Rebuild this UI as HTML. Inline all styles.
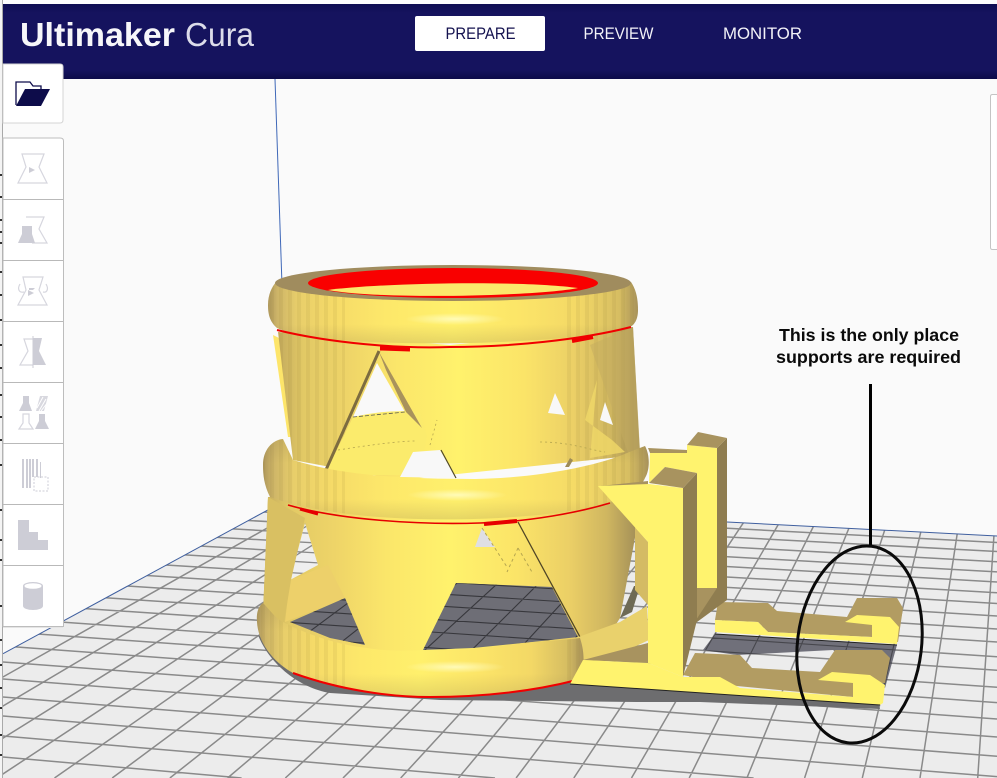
<!DOCTYPE html>
<html><head><meta charset="utf-8"><title>Ultimaker Cura</title>
<style>
html,body{margin:0;padding:0;background:#fafafa;width:997px;height:778px;overflow:hidden}
body{position:relative}
svg{position:absolute;left:0;top:0;display:block;overflow:hidden}
text{font-family:"Liberation Sans",sans-serif}
</style></head><body>
<svg width="997" height="778" viewBox="0 0 997 778" xmlns="http://www.w3.org/2000/svg">
<defs>
<clipPath id="plate"><path d="M3 653.700L287 499.600L997 536V778H3Z"/></clipPath>
<clipPath id="w1"><path d="M456 583L552 587L578 637L523 643L473 648L423 650Z"/></clipPath>
<clipPath id="w2"><path d="M290 622L345 598L365 645L330 638Z"/></clipPath>
<clipPath id="w3"><path d="M305 523L318 565L290 580Z"/></clipPath>
<clipPath id="w5"><path d="M703 650L715 634L897 645L885 688L833 650L737 655Z"/></clipPath>
<clipPath id="sides"><path d="M250 250H345V710H250ZM565 250H655V710H565Z"/></clipPath>
<pattern id="st" width="9" height="20" patternUnits="userSpaceOnUse"><rect width="4" height="20" fill="#8a7336" fill-opacity=".1"/></pattern>
<path id="grid" fill="none" d="M3 490L997 542.500M3 498L997 551.500M3 507L997 561.700M3 516L997 571.900M3 525L997 582M3 534.500L997 592.800M3 544L997 603.500M3 555L997 616M3 566.500L997 629M3 578L997 642M3 591L997 656.700M3 603L997 670.300M3 618L997 687.300M3 631.500L997 702.600M3 646L997 719M3 662L997 737M3 679L997 756.200M3 697L997 776.600M3 716L753.600 778M3 736L495 778M3 757L241.600 778
M1023 102L977.700 778M1023 102L920 778M1023 102L862.300 778M1023 102L804.600 778M1023 102L746.900 778M1023 102L689.200 778M1023 102L631.500 778M1023 102L573.800 778M1023 102L516.100 778M1023 102L458.400 778M1023 102L400.700 778M1023 102L343 778M1023 102L285.300 778M1023 102L227.600 778M1023 102L169.900 778M1023 102L112.200 778M1023 102L54.500 778M1023 102L-3.200 778M1023 102L-60.900 778M1023 102L-118.600 778M1023 102L-176.300 778M1023 102L-234 778M1023 102L-291.700 778M1023 102L-349.400 778"/>
<path id="rT" d="M268 305C268 294 272 287 276 282C350 262 556 262 631 282C635 288 638 296 638 310C638 320 634 325 630 327C580 345 330 352 277 328C270 322 268 315 268 305Z"/>
<path id="rM" d="M263 465C263 450 272 440 283 439L293 460C340 475 400 479 475 479C540 478 600 465 627 453L645 446C650 455 650 470 645 478C640 490 625 497 610 502C550 522 360 530 270 497C264 485 263 475 263 465Z"/>
<path id="rB" d="M257 622C256 610 260 605 263 603C270 610 275 618 283 622C310 636 340 645 367 648C385 651 405 651 423 650C455 650 490 648 523 643C545 641 565 640 580 638C584 650 584 660 583 667C581 674 578 678 574 681C530 693 470 698 427 697C380 696 335 688 293 673C270 660 258 640 257 622Z"/>
<linearGradient id="band" x1="0" x2="1" y1="0" y2="0">
<stop offset="0" stop-color="#ae975c"/><stop offset=".025" stop-color="#cdb468"/><stop offset=".08" stop-color="#e8ce6a"/><stop offset=".18" stop-color="#f6db68"/><stop offset=".32" stop-color="#fde86a"/><stop offset=".5" stop-color="#fff06c"/><stop offset=".68" stop-color="#fce568"/><stop offset=".84" stop-color="#f3d866"/><stop offset=".95" stop-color="#d6bd62"/><stop offset="1" stop-color="#a8925a"/>
</linearGradient>
<linearGradient id="shade" x1="0" x2="0" y1="0" y2="1">
<stop offset="0" stop-color="#8d7a4a" stop-opacity=".22"/><stop offset=".3" stop-color="#8d7a4a" stop-opacity="0"/><stop offset=".75" stop-color="#8d7a4a" stop-opacity="0"/><stop offset="1" stop-color="#8d7a4a" stop-opacity=".22"/>
</linearGradient>
<radialGradient id="hi"><stop offset="0" stop-color="#fffcc0" stop-opacity=".9"/><stop offset="1" stop-color="#fffcc0" stop-opacity="0"/></radialGradient>
<linearGradient id="body" x1="0" x2="1" y1="0" y2="0">
<stop offset="0" stop-color="#c4ab5e"/><stop offset=".07" stop-color="#e2c965"/><stop offset=".2" stop-color="#efd568"/><stop offset=".33" stop-color="#fbe66a"/><stop offset=".5" stop-color="#fff26c"/><stop offset=".68" stop-color="#fbe468"/><stop offset=".82" stop-color="#ebcf66"/><stop offset=".92" stop-color="#cfb660"/><stop offset="1" stop-color="#a38f58"/>
</linearGradient>
<linearGradient id="hdr" x1="0" x2="0" y1="0" y2="1">
<stop offset="0" stop-color="#0e0d52"/><stop offset=".12" stop-color="#15135e"/><stop offset=".88" stop-color="#15135e"/><stop offset="1" stop-color="#0c0b48"/>
</linearGradient>
</defs>

<rect width="997" height="778" fill="#fafafa"/>
<rect x="0" y="0" width="997" height="4" fill="#fdfdfd"/>

<!-- build plate -->
<path d="M3 653.700L287 499.600L997 536V778H3Z" fill="#ececec"/>
<g clip-path="url(#plate)"><use href="#grid" stroke="#8a8a8a" stroke-width="1.500"/></g>
<path d="M3 653.700L287 499.600" stroke="#3f5f9f" stroke-width="1" fill="none"/>
<path d="M727 522L997 536" stroke="#3f5f9f" stroke-width="1" fill="none"/>
<path d="M275 79L282 285" stroke="#3f68b8" stroke-width="1" fill="none"/>

<!-- shadow -->
<path d="M258 635C270 665 300 688 330 693L440 700L640 702L700 702L880 709L878 703L570 682L430 690L300 665Z" fill="#6d6d6f"/>
<path d="M703 650L715 634L897 645L885 688L833 650L737 655Z" fill="#70707a"/>
<g clip-path="url(#w5)"><use href="#grid" stroke="#46464c" stroke-width="1.100"/></g>
<path d="M715 634L897 645" stroke="#222" stroke-width="1"/>

<!-- lower body -->
<path d="M268 497L263 613L283 660L600 650L620 618L637 527L610 495Z" fill="url(#body)"/>
<path d="M305 523L318 565L290 580Z" fill="#efefef"/>
<g clip-path="url(#w3)"><use href="#grid" stroke="#8a8a8a" stroke-width="1.300"/></g>
<path d="M290 580L328 565L345 598L285 622Z" fill="#edd06a"/>
<path d="M290 622L345 598L365 645L330 638Z" fill="#6e6e76"/>
<g clip-path="url(#w2)"><use href="#grid" stroke="#37373c" stroke-width="1.100"/></g>
<path d="M456 583L552 587L578 637L523 643L473 648L423 650Z" fill="#6e6e76"/>
<g clip-path="url(#w1)"><use href="#grid" stroke="#37373c" stroke-width="1.100"/></g>
<path d="M482 528L495 547L475 547Z" fill="#dfdfe4"/>
<path d="M482 528L507 567M518 548L507 572M518 548L532 572" stroke="#b5a54f" stroke-width="1" stroke-dasharray="3 3" fill="none"/>
<path d="M518 522L580 637" stroke="#4f4526" stroke-width="1.300" fill="none"/>
<path d="M268 497L305 518L291 580L284 622L270 618L263 613Z" fill="#d9c062"/>
<path d="M620 618L634 586L640 586L632 612Z" fill="#6e6a55"/>

<!-- back of bottom ring on right -->
<path d="M570 640L620 622L647 606L649 640L590 668L570 670Z" fill="#e9d16c"/>
<path d="M635 527L648 542L648 605L635 590Z" fill="#d4bb64"/>

<!-- bottom ring -->
<use href="#rB" fill="url(#band)"/>
<use href="#rB" fill="url(#shade)"/>
<g clip-path="url(#sides)"><use href="#rB" fill="url(#st)"/></g>
<ellipse cx="455" cy="667" rx="50" ry="6" fill="url(#hi)"/>
<path d="M293 673C340 690 390 697 430 697C480 697 530 692 577 680" stroke="#f00000" stroke-width="2" fill="none"/>

<!-- base plate and fork -->
<path d="M583 660L648 643L648 663Z" fill="#a8935f"/>
<path d="M715 620L718 602L768 603L777 611L847 617L857 598L897 598L903 608L898 642L872 637L768 632L758 622Z" fill="#b29c62"/>
<path d="M715 620L758 622L768 632L872 637V625L845 622L857 615L890 617L899 627L897 644L715 632Z" fill="#fff36e"/>
<path d="M695 653L740 655L752 668L820 672L835 650L882 650L890 658L885 683H853V697L737 686L683 675Z" fill="#b29c62"/>
<path d="M583 660L648 663L683 677L720 677L740 688L853 697V683L818 680L832 672L870 675L885 685L883 703L880 705L570 684Z" fill="#fff36e"/>
<path d="M570 684L880 705" stroke="#222" stroke-width="1"/>

<!-- rear pillar -->
<path d="M717 448L727 438V600L697 622V590Z" fill="#8f7d50"/>
<path d="M696 588H717L696 620Z" fill="#a8935f"/>
<path d="M648 448L687 450V453H650Z" fill="#a8935f"/>
<path d="M650 453H687V445L717 448V588H697V473L665 467L649 483Z" fill="#fff36e"/>
<path d="M687 445L698 432L727 438L717 448Z" fill="#a8935f"/>

<!-- front pillar -->
<path d="M683 488L697 473V620L683 677Z" fill="#8f7d50"/>
<path d="M697 590V622L683 640V620Z" fill="#8f7d50"/>

<!-- upper body -->
<path d="M273 335L279 338L293 437L288 437Z" fill="#fde56a"/>
<path id="ub" d="M278 332L293 460L400 480L640 455L633 327L450 345Z" fill="url(#body)"/>
<g clip-path="url(#sides)"><path d="M278 332L293 460L400 480L640 455L633 327L450 345Z" fill="url(#st)"/></g>
<path d="M590 345L633 327L640 450L628 453Z" fill="#c4ab60" opacity=".5"/>
<path d="M377 363L353 417L405 412Z" fill="#f9f9f9"/>
<path d="M353 417C380 411 402 410 420 412L427 436L420 475L340 475L326 472Z" fill="#fbeb6c"/>
<path d="M379 352L422 428L406 412L386 370Z" fill="#a8925c"/>
<path d="M379 351L325 472" stroke="#7d6c40" stroke-width="3" fill="none"/>
<path d="M353 417L405 412" stroke="#5b5b50" stroke-width=".8" stroke-dasharray="4 2" fill="none"/>
<path d="M413 452L440 450L456 478L400 477Z" fill="#f8f8f8"/>
<path d="M441 450L456 478" stroke="#50482a" stroke-width="1.200"/>
<path d="M555 393L548 413L565 415Z" fill="#f8f8f8"/>
<path d="M597 380L585 420L612 440L625 452L590 458Z" fill="#f0d868" opacity=".8"/>
<path d="M605 402L600 420L613 425Z" fill="#f8f8f8"/>
<path d="M572 463L592 461L570 467Z" fill="#f8f8f8"/>
<path d="M565 467L570 458L573 460L569 467Z" fill="#9d8b58"/>
<path d="M430 445L437 420M338 450C370 445 400 441 415 441M540 442C570 442 590 450 605 452" stroke="#b5a54f" stroke-width=".8" stroke-dasharray="2 3" fill="none"/>

<!-- middle ring -->
<use href="#rM" fill="url(#band)"/>
<use href="#rM" fill="url(#shade)"/>
<g clip-path="url(#sides)"><use href="#rM" fill="url(#st)"/></g>
<ellipse cx="457" cy="495" rx="50" ry="6" fill="url(#hi)"/>
<path d="M288 505C340 520 420 525 480 523C530 522 580 512 610 503" stroke="#e60000" stroke-width="1.600" fill="none"/>
<path d="M300 509L318 514" stroke="#e60000" stroke-width="3"/>
<path d="M484 524L517 521" stroke="#e60000" stroke-width="4"/>

<!-- front pillar faces over model -->
<path d="M600 486L648 481V485L598 486Z" fill="#a8935f"/>
<path d="M598 486L649 484L683 488V677L648 663V542Z" fill="#fff36e"/>
<path d="M649 483L665 467L697 473L683 488Z" fill="#a8935f"/>

<!-- top ring -->
<use href="#rT" fill="url(#band)"/>
<use href="#rT" fill="url(#shade)"/>
<g clip-path="url(#sides)"><use href="#rT" fill="url(#st)"/></g>
<ellipse cx="455" cy="319" rx="50" ry="6" fill="url(#hi)"/>
<ellipse cx="453" cy="283" rx="178" ry="18" fill="#a08c5e"/>
<ellipse cx="453" cy="283" rx="145" ry="15" fill="#f90000"/>
<path d="M328 290C380 283 520 280 578 288C540 296 380 300 328 290Z" fill="#fbe86c"/>
<path d="M277 330C330 343 400 349 450 347C510 347 580 340 631 327" stroke="#f00000" stroke-width="2" fill="none"/>
<path d="M380 348L410 349" stroke="#f00000" stroke-width="5"/>
<path d="M572 341L593 337" stroke="#f00000" stroke-width="4"/>

<!-- annotation -->
<path d="M870.500 384V547" stroke="#000" stroke-width="3"/>
<ellipse cx="859.500" cy="644.500" rx="62" ry="99" transform="rotate(7 859.500 644.500)" fill="none" stroke="#0a0a0a" stroke-width="3"/>
<text x="779" y="341" font-size="17.500" font-weight="700" fill="#0a0a0a" textLength="180" lengthAdjust="spacingAndGlyphs">This is the only place</text>
<text x="776" y="363" font-size="17.500" font-weight="700" fill="#0a0a0a" textLength="185" lengthAdjust="spacingAndGlyphs">supports are required</text>

<!-- header -->
<rect x="3" y="4" width="994" height="75" fill="url(#hdr)"/>
<text x="20" y="46" font-size="33" font-weight="700" fill="#f7f7fa" textLength="155" lengthAdjust="spacingAndGlyphs">Ultimaker</text>
<text x="185" y="46" font-size="33" fill="#dcdcea" textLength="69" lengthAdjust="spacingAndGlyphs">Cura</text>
<rect x="415" y="16" width="130" height="35" rx="2" fill="#fff"/>
<text x="445.500" y="39" font-size="17" fill="#14124f" textLength="70" lengthAdjust="spacingAndGlyphs">PREPARE</text>
<text x="583.500" y="39" font-size="17" fill="#f2f2f8" textLength="70" lengthAdjust="spacingAndGlyphs">PREVIEW</text>
<text x="723" y="39" font-size="17" fill="#f2f2f8" textLength="79" lengthAdjust="spacingAndGlyphs">MONITOR</text>

<!-- right panel -->
<rect x="990.500" y="94.500" width="6" height="155" fill="#fff"/>
<path d="M997 94.500H992.500Q990.500 94.500 990.500 96.500V247.500Q990.500 249.500 992.500 249.500H997" fill="none" stroke="#c4c4c4"/>

<!-- left edge -->
<rect x="0" y="0" width="3" height="778" fill="#f4f4f4"/>
<path d="M2.500 0V778" stroke="#a9a9a9" stroke-width="1"/>
<path d="M0 175h2M0 197h2M0 220h2M0 232h2M0 243h2M0 272h2M0 295h2M0 320h2M0 345h2M0 368h2M0 395h2M0 417h2M0 440h2M0 465h2M0 510h2M0 540h2M0 560h2M0 606h2M0 640h2M0 665h2M0 688h2M0 708h2M0 735h2M0 755h2" stroke="#333" stroke-width="2"/>

<!-- open button -->
<path d="M3 64H60Q63 64 63 67V120Q63 123 60 123H3Z" fill="#fff" stroke="#d4d4d4"/>
<path d="M16 105V82H30L33 86H41V89" fill="none" stroke="#0d0c4a" stroke-width="1.300"/>
<path d="M16 106L25 89H50L41 106Z" fill="#0d0c4a"/>

<!-- tool panel -->
<path d="M3 138H60Q63.500 138 63.500 141V626.500H3Z" fill="#fff" stroke="#bdbdbd"/>
<path d="M3 199.500H63M3 260.500H63M3 321.500H63M3 382.500H63M3 443.500H63M3 504.500H63M3 565.500H63" stroke="#b9b9b9"/>
<rect x="3" y="627" width="60" height="1" fill="#e4e4e4"/>

<g fill="none" stroke="#d6d6de" stroke-width="1.200">
<path d="M22 154H44L39 167L47 183H18L26 167Z"/>
<path d="M26 217H44L39 229L47 243H32"/>
<path d="M23 277H43L39 290L47 305H18L26 290Z"/>
<path d="M20 284C17 289 19 293 24 292M46 284C49 289 47 293 43 292"/>
<path d="M33 339H24L28 351L20 365H33"/>
<path d="M19 429L23 423V414H29V423L33 429Z"/>
<path d="M34 477H48V491H34Z" stroke-dasharray="2 1.500"/>
</g>
<g fill="#cdcdd6" stroke="none">
<path d="M18 170h11v-3l6 3l-6 3v-3H18Z"/>
<path d="M18 243L22 234V226H32V234L35 243Z"/>
<path d="M29 288h6l-2 2h-4ZM28 290l6 3l-6 3Z"/>
<path d="M33 338H42L39 351L46 365H33Z"/>
<rect x="32.500" y="336" width="1" height="32"/>
<path d="M19 411L23 403V396H29V403L32 411Z"/>
<path d="M35 429L39 421V414H45V421L49 429Z"/>
<path d="M22 459h2v29h-2ZM26 459h2v29h-2ZM29 459h2v29h-2ZM32 459h2v18h-2ZM36 459h2v18h-2ZM40 462h1v16h-1Z"/>
<path d="M18 520H29V532H38V540H48V550H18Z"/>
<path d="M23 586A10 4 0 0 1 43 586V606A10 4 0 0 1 23 606Z"/>
</g>
<ellipse cx="33" cy="586" rx="8.500" ry="2.800" fill="#fff"/>
<path d="M36 411L40 396H48L44 411Z" fill="#d8d8df"/>
<path d="M37 408L43 397M39 411L46 399M41 411L48 402" stroke="#fff" stroke-width="1"/>
</svg>
</body></html>
